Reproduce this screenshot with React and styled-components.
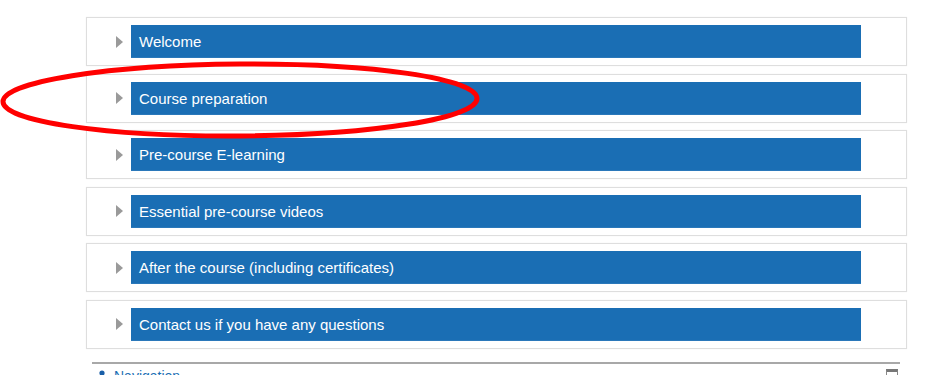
import React from 'react'
import styled, { createGlobalStyle } from 'styled-components'

const GlobalStyle = createGlobalStyle`
  html, body {
    margin: 0;
    padding: 0;
    background: #ffffff;
    font-family: 'Liberation Sans', Arial, sans-serif;
    overflow: hidden;
  }
`

const Page = styled.div`
  position: relative;
  width: 940px;
  height: 375px;
  overflow: hidden;
  padding-top: 17px;
  box-sizing: border-box;
`

const Sections = styled.ul`
  list-style: none;
  margin: 0 0 0 86px;
  padding: 0;
  width: 821px;
  display: flex;
  flex-direction: column;
  gap: 7.6px;
`

const Section = styled.li`
  height: 49px;
  box-sizing: border-box;
  border: 1px solid #dedede;
  box-shadow: 0 0 1px rgba(0, 0, 0, 0.08);
  padding: 7px 45px 7px 29px;
  display: flex;
  align-items: center;
`

const Toggle = styled.span`
  width: 0;
  height: 0;
  border-top: 6px solid transparent;
  border-bottom: 6px solid transparent;
  border-left: 7px solid #9a9a9a;
  margin-right: 8px;
`

const Bar = styled.div`
  flex: 1;
  height: 33px;
  box-sizing: border-box;
  background: #1a6eb4;
  border-bottom: 1px solid #2a78ba;
  color: #ffffff;
  font-size: 15px;
  line-height: 33px;
  padding-left: 8px;
  white-space: nowrap;
`

const Block = styled.div`
  margin: 13px 0 0 92px;
  width: 808px;
  border-top: 2px solid #a8a8a8;
  padding-top: 4px;
  display: flex;
  align-items: flex-start;
`

const BlockTitle = styled.div`
  flex: 1;
  display: flex;
  align-items: center;
  gap: 8px;
  padding-left: 6px;
  color: #1a6eb4;
  font-size: 14px;
  line-height: 16px;
`

const Collapse = styled.span`
  width: 12px;
  height: 12px;
  box-sizing: border-box;
  border: 1px solid #888;
  border-top: 3px solid #777;
  margin-right: 2px;
  margin-top: 1px;
`

const Annotation = styled.svg`
  position: absolute;
  left: 0;
  top: 0;
  pointer-events: none;
`

const sections = [
  'Welcome',
  'Course preparation',
  'Pre-course E-learning',
  'Essential pre-course videos',
  'After the course (including certificates)',
  'Contact us if you have any questions',
]

export default function App() {
  return (
    <Page>
      <GlobalStyle />
      <Sections>
        {sections.map(name => (
          <Section key={name}>
            <Toggle />
            <Bar>{name}</Bar>
          </Section>
        ))}
      </Sections>
      <Block>
        <BlockTitle>
          <svg width="8" height="12" viewBox="0 0 8 12">
            <circle cx="4" cy="3" r="2.6" fill="#1a5fa8" />
            <rect x="2.6" y="5" width="2.8" height="7" fill="#1a5fa8" />
          </svg>
          Navigation
        </BlockTitle>
        <Collapse />
      </Block>
      <Annotation width="940" height="375">
        <ellipse
          cx="240"
          cy="100"
          rx="237"
          ry="36"
          fill="none"
          stroke="#ff0000"
          strokeWidth="5"
          transform="rotate(-0.4 240 100)"
        />
      </Annotation>
    </Page>
  )
}
